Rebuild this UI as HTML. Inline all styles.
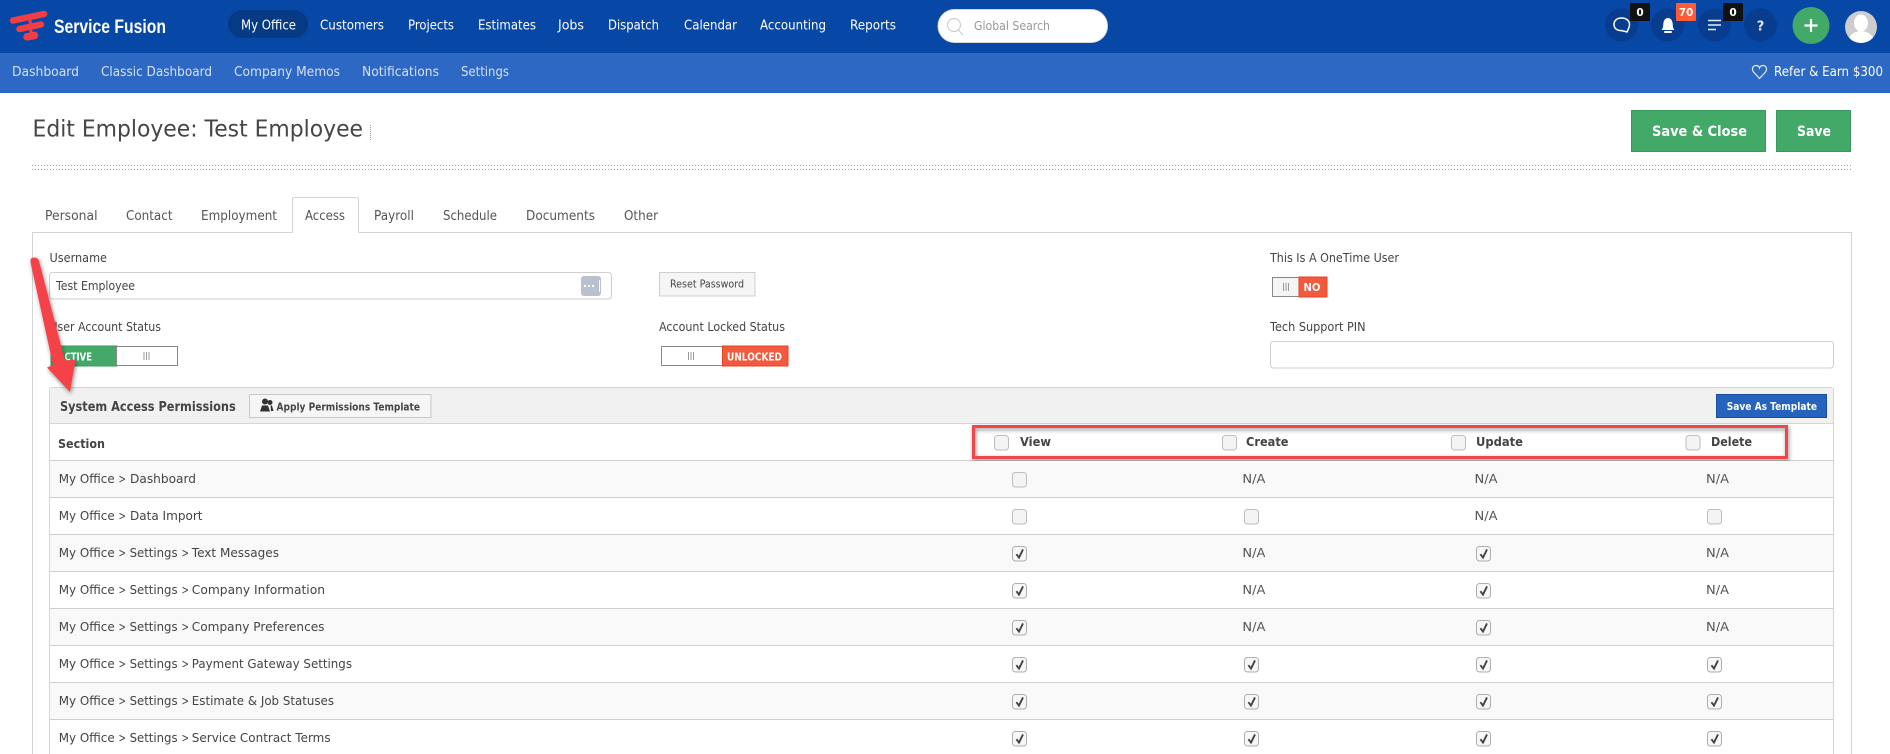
<!DOCTYPE html>
<html lang="en">
<head>
<meta charset="utf-8">
<title>Edit Employee: Test Employee</title>
<style>
html,body{margin:0;padding:0;background:#fff;width:1890px;height:754px;overflow:hidden}
svg{display:block}
text{font-family:"DejaVu Sans","Liberation Sans",sans-serif;font-size:13px;fill:#444}
.nav text{fill:#fff;font-size:13px}
.sub text{fill:#d5e1f5;font-size:13px}
.tab text{fill:#555;font-size:13px}
.lbl{font-size:12.5px;fill:#444}
.row text{font-size:12.5px;fill:#444}
.na{font-size:12px;fill:#555}
.b{font-weight:bold}
.w{fill:#fff}
</style>
</head>
<body>
<svg xmlns="http://www.w3.org/2000/svg" width="1890" height="754" viewBox="0 0 1890 754">
<defs>
  <g id="cb"><rect x=".5" y=".5" width="14" height="14.5" rx="3" fill="#f4f4f4" stroke="#bdbdbd"/></g>
  <g id="ck"><rect x=".5" y=".5" width="14" height="14.5" rx="3" fill="#f7f7f7" stroke="#aeaeae"/><path d="M4.4 8.2 L7 11.6 L11 3.4" fill="none" stroke="#444" stroke-width="1.9"/></g>
  <filter id="sh" x="-10%" y="-20%" width="125%" height="150%"><feDropShadow dx="1" dy="2" stdDeviation="2" flood-color="#000" flood-opacity=".45"/></filter>
</defs>

<rect width="1890" height="754" fill="#fff"/>

<!-- Top header -->
<rect width="1890" height="53" fill="#0747a6"/>
<g fill="none" stroke="#f03e44" stroke-linecap="round">
  <path d="M13 20.500 L44 14" stroke-width="6.500"/>
  <path d="M19.500 29 L41 24.500" stroke-width="6.500"/>
  <path d="M27 36.800 L34.500 35.500" stroke-width="7.500"/>
  <path d="M30 20 L31 32" stroke-width="3"/>
</g>
<text x="54" y="33" class="b w" textLength="112" lengthAdjust="spacingAndGlyphs" style="font-family:'Liberation Sans',sans-serif;font-size:19px">Service Fusion</text>

<rect x="228" y="10" width="80" height="28" rx="14" fill="#073a85"/>
<g class="nav">
  <text x="241" y="29.500" textLength="55" lengthAdjust="spacingAndGlyphs">My Office</text>
  <text x="320" y="29.500" textLength="64" lengthAdjust="spacingAndGlyphs">Customers</text>
  <text x="408" y="29.500" textLength="46" lengthAdjust="spacingAndGlyphs">Projects</text>
  <text x="478" y="29.500" textLength="58" lengthAdjust="spacingAndGlyphs">Estimates</text>
  <text x="558" y="29.500" textLength="26" lengthAdjust="spacingAndGlyphs">Jobs</text>
  <text x="608" y="29.500" textLength="51" lengthAdjust="spacingAndGlyphs">Dispatch</text>
  <text x="684" y="29.500" textLength="53" lengthAdjust="spacingAndGlyphs">Calendar</text>
  <text x="760" y="29.500" textLength="66" lengthAdjust="spacingAndGlyphs">Accounting</text>
  <text x="850" y="29.500" textLength="46" lengthAdjust="spacingAndGlyphs">Reports</text>
</g>

<!-- Search -->
<rect x="938" y="9.500" width="169.500" height="33" rx="16.500" fill="#fff" stroke="#d8d8d8"/>
<circle cx="954" cy="25" r="6.500" fill="none" stroke="#cfcfcf" stroke-width="1.200"/>
<path d="M958.500 30 L963 35" stroke="#cfcfcf" stroke-width="1.200"/>
<text x="974" y="30" textLength="76" lengthAdjust="spacingAndGlyphs" style="font-size:12px;fill:#999">Global Search</text>

<!-- Right icons -->
<g fill="#073c8e">
  <circle cx="1621.500" cy="25" r="16.500"/>
  <circle cx="1667.500" cy="25" r="16.500"/>
  <circle cx="1714.500" cy="25" r="16.500"/>
  <circle cx="1760.500" cy="25" r="16.500"/>
</g>
<path d="M1627 32 C1628 29.500 1629.500 27.500 1629.500 24.500 C1629.500 20.500 1626 18 1621.500 18 C1617 18 1614 20.500 1614 24.500 C1614 28.500 1617.500 31 1621.500 30.500 Z" fill="none" stroke="#fff" stroke-width="1.500"/>
<path d="M1661.500 30 C1663.500 28 1663 25 1663.500 22.500 C1664 19.500 1666 18 1668 18 C1670 18 1672 19.500 1672.500 22.500 C1673 25 1672.500 28 1674.500 30 Z" fill="#fff"/>
<rect x="1664" y="31" width="8" height="2" rx="1" fill="#fff"/>
<path d="M1708 20.500 H1721 M1708 25 H1721 M1708 29.500 H1716" stroke="#e6eefa" stroke-width="1.500"/>
<text x="1760.500" y="30.500" text-anchor="middle" class="b" style="font-size:13px;fill:#dfe8f6">?</text>

<rect x="1630" y="3" width="20" height="18" rx="1" fill="#111"/>
<text x="1640" y="16" text-anchor="middle" class="b w" style="font-size:10.500px">0</text>
<rect x="1676" y="3" width="20" height="18" rx="1" fill="#ff5b38"/>
<text x="1686" y="16" text-anchor="middle" class="b w" style="font-size:10.500px">70</text>
<rect x="1723" y="3" width="20" height="18" rx="1" fill="#111"/>
<text x="1733" y="16" text-anchor="middle" class="b w" style="font-size:10.500px">0</text>

<circle cx="1811" cy="25.500" r="18.500" fill="#43a968"/>
<path d="M1811 19 V32 M1804.500 25.500 H1817.500" stroke="#fff" stroke-width="2.200"/>

<clipPath id="av"><circle cx="1861" cy="27" r="16"/></clipPath>
<circle cx="1861" cy="27" r="16" fill="#cdcdcd"/>
<g clip-path="url(#av)" fill="#fff">
  <ellipse cx="1861" cy="23" rx="7" ry="8.500"/>
  <ellipse cx="1861" cy="42" rx="13" ry="11"/>
</g>

<!-- Sub nav -->
<rect y="53" width="1890" height="40" fill="#2d68c4"/>
<g class="sub">
  <text x="12" y="76" textLength="67" lengthAdjust="spacingAndGlyphs">Dashboard</text>
  <text x="101" y="76" textLength="111" lengthAdjust="spacingAndGlyphs">Classic Dashboard</text>
  <text x="234" y="76" textLength="106" lengthAdjust="spacingAndGlyphs">Company Memos</text>
  <text x="362" y="76" textLength="77" lengthAdjust="spacingAndGlyphs">Notifications</text>
  <text x="461" y="76" textLength="48" lengthAdjust="spacingAndGlyphs">Settings</text>
</g>
<path d="M1759.500 78.500 L1753.500 72 C1751 68.500 1753.500 65.500 1756 65.500 C1757.500 65.500 1759 66.500 1759.500 68 C1760 66.500 1761.500 65.500 1763 65.500 C1765.500 65.500 1768 68.500 1765.500 72 Z" fill="none" stroke="#e6eefa" stroke-width="1.200"/>
<text x="1774" y="76" class="w" textLength="109" lengthAdjust="spacingAndGlyphs" style="font-size:13px">Refer &amp; Earn $300</text>

<!-- Title -->
<text x="32.500" y="136.700" textLength="330.500" lengthAdjust="spacingAndGlyphs" style="font-size:23.500px;fill:#464646">Edit Employee: Test Employee</text>
<path d="M370.500 125 V140" stroke="#999" stroke-dasharray="1 1"/>

<rect x="1631.500" y="110.500" width="134" height="41" fill="#43a968" stroke="#3a9a5d"/>
<text x="1652" y="136" class="b w" textLength="95" lengthAdjust="spacingAndGlyphs" style="font-size:14.500px">Save &amp; Close</text>
<rect x="1776.500" y="110.500" width="74" height="41" fill="#43a968" stroke="#3a9a5d"/>
<text x="1797" y="136" class="b w" textLength="34" lengthAdjust="spacingAndGlyphs" style="font-size:14.500px">Save</text>

<path d="M32 165.500 H1851 M32 169.500 H1851" stroke="#a0a0a0" stroke-dasharray="1 2" fill="none"/>

<!-- Tabs and panel -->
<path d="M32.500 754 V232.500 H292.500 M358.500 232.500 H1851.500 V754" fill="none" stroke="#d5d5d5"/>
<path d="M292.500 232.500 V199 Q292.500 197.500 294 197.500 H357 Q358.500 197.500 358.500 199 V232.500" fill="#fff" stroke="#d5d5d5"/>
<g class="tab">
  <text x="45" y="220" textLength="52.500" lengthAdjust="spacingAndGlyphs">Personal</text>
  <text x="126" y="220" textLength="46.500" lengthAdjust="spacingAndGlyphs">Contact</text>
  <text x="201" y="220" textLength="76" lengthAdjust="spacingAndGlyphs">Employment</text>
  <text x="305" y="220" textLength="40" lengthAdjust="spacingAndGlyphs">Access</text>
  <text x="374" y="220" textLength="40" lengthAdjust="spacingAndGlyphs">Payroll</text>
  <text x="443" y="220" textLength="54" lengthAdjust="spacingAndGlyphs">Schedule</text>
  <text x="526" y="220" textLength="69" lengthAdjust="spacingAndGlyphs">Documents</text>
  <text x="624" y="220" textLength="34" lengthAdjust="spacingAndGlyphs">Other</text>
</g>

<!-- Form -->
<text x="49.500" y="262" class="lbl" textLength="57.500" lengthAdjust="spacingAndGlyphs">Username</text>
<rect x="49.500" y="272.500" width="562" height="26.500" rx="3" fill="#fff" stroke="#cfcfcf"/>
<text x="56" y="290" class="lbl" textLength="79" lengthAdjust="spacingAndGlyphs">Test Employee</text>
<rect x="581" y="276" width="20" height="20" rx="3" fill="#b9c1cf"/>
<path d="M584 286 H596" stroke="#fff" stroke-width="2" stroke-dasharray="2 2"/>
<path d="M599.500 280 V292" stroke="#fff"/>

<rect x="659.500" y="272.500" width="95.500" height="23.500" fill="#f5f5f5" stroke="#cfcfcf"/>
<text x="670" y="287.500" textLength="74" lengthAdjust="spacingAndGlyphs" style="font-size:10.500px;fill:#444">Reset Password</text>

<text x="1270" y="262" class="lbl" textLength="129" lengthAdjust="spacingAndGlyphs">This Is A OneTime User</text>
<rect x="1272.500" y="277.500" width="27" height="19" fill="#f5f5f5" stroke="#888"/>
<path d="M1283.500 283 V291 M1286 283 V291 M1288.500 283 V291" stroke="#999"/>
<rect x="1299" y="277" width="28" height="20" fill="#f15a3c" stroke="#e5432b"/>
<text x="1303.500" y="291" class="b w" textLength="17" lengthAdjust="spacingAndGlyphs" style="font-size:10.500px">NO</text>

<text x="49.500" y="331" class="lbl" textLength="111.500" lengthAdjust="spacingAndGlyphs">User Account Status</text>
<rect x="51" y="346" width="66" height="20" fill="#43a968" stroke="#3a9a5d"/>
<text x="58" y="360.500" class="b w" textLength="34" lengthAdjust="spacingAndGlyphs" style="font-size:10.500px">ACTIVE</text>
<rect x="116.500" y="346.500" width="61" height="19" fill="#fff" stroke="#888"/>
<path d="M144 352 V360 M146.500 352 V360 M149 352 V360" stroke="#999"/>

<text x="659" y="331" class="lbl" textLength="126" lengthAdjust="spacingAndGlyphs">Account Locked Status</text>
<rect x="661.500" y="346.500" width="61" height="19" fill="#fff" stroke="#888"/>
<path d="M688.500 352 V360 M691 352 V360 M693.500 352 V360" stroke="#999"/>
<rect x="722.500" y="346" width="65.500" height="20" fill="#f15a3c" stroke="#e5432b"/>
<text x="727" y="360.500" class="b w" textLength="55" lengthAdjust="spacingAndGlyphs" style="font-size:10.500px">UNLOCKED</text>

<text x="1270" y="331" class="lbl" textLength="95.500" lengthAdjust="spacingAndGlyphs">Tech Support PIN</text>
<rect x="1270.500" y="341.500" width="563" height="26.500" rx="3" fill="#fff" stroke="#cfcfcf"/>

<!-- Permissions panel -->
<path d="M49.500 754 V390 Q49.500 387.500 52 387.500 H1831 Q1833.500 387.500 1833.500 390 V754" fill="#fff" stroke="#d5d5d5"/>
<rect x="50" y="388" width="1783" height="35.500" fill="#f1f1f1"/>
<path d="M50 423.500 H1833" stroke="#d5d5d5"/>
<text x="60" y="411" class="b" textLength="175.700" lengthAdjust="spacingAndGlyphs" style="font-size:13px;fill:#444">System Access Permissions</text>
<rect x="249.500" y="394.500" width="181.500" height="23" fill="#f6f6f6" stroke="#c8c8c8"/>
<g fill="#333">
  <circle cx="265" cy="401.500" r="3"/>
  <path d="M260 411.500 L262 405.500 H268 L270 411.500 Z"/>
  <circle cx="270" cy="402.500" r="2.500"/>
  <path d="M270.500 405.500 H272 L273.500 411 H271 Z"/>
</g>
<text x="276.500" y="410.500" class="b" textLength="143.500" lengthAdjust="spacingAndGlyphs" style="font-size:10.500px;fill:#444">Apply Permissions Template</text>
<rect x="1716.500" y="394.500" width="110" height="23" fill="#2563bd" stroke="#1a4c9f"/>
<text x="1726.700" y="410" class="b w" textLength="90.300" lengthAdjust="spacingAndGlyphs" style="font-size:10.500px">Save As Template</text>

<!-- Header row -->
<text x="58" y="448" class="b" textLength="47" lengthAdjust="spacingAndGlyphs" style="font-size:12.500px;fill:#444">Section</text>
<path d="M50 460.500 H1833" stroke="#cfcfcf"/>
<use href="#cb" x="994" y="435"/>
<text x="1020" y="446" class="b" textLength="31" lengthAdjust="spacingAndGlyphs" style="font-size:12.500px;fill:#444">View</text>
<use href="#cb" x="1222" y="435"/>
<text x="1246" y="446" class="b" textLength="42.500" lengthAdjust="spacingAndGlyphs" style="font-size:12.500px;fill:#444">Create</text>
<use href="#cb" x="1451" y="435"/>
<text x="1476" y="446" class="b" textLength="47" lengthAdjust="spacingAndGlyphs" style="font-size:12.500px;fill:#444">Update</text>
<use href="#cb" x="1685.500" y="435"/>
<text x="1711" y="446" class="b" textLength="41" lengthAdjust="spacingAndGlyphs" style="font-size:12.500px;fill:#444">Delete</text>
<rect x="973.500" y="426.500" width="813" height="31" fill="none" stroke="#f0444a" stroke-width="3" filter="url(#sh)"/>

<!-- Rows -->
<rect x="50" y="461" width="1783" height="36" fill="#f9f9f9"/>
<rect x="50" y="535" width="1783" height="36" fill="#f9f9f9"/>
<rect x="50" y="609" width="1783" height="36" fill="#f9f9f9"/>
<rect x="50" y="683" width="1783" height="36" fill="#f9f9f9"/>
<path d="M50 497.500 H1833 M50 534.500 H1833 M50 571.500 H1833 M50 608.500 H1833 M50 645.500 H1833 M50 682.500 H1833 M50 719.500 H1833" stroke="#cfcfcf"/>

<g class="row">
  <text x="58.700" y="483" textLength="56" lengthAdjust="spacingAndGlyphs">My Office</text>
  <text x="118.500" y="483" textLength="7.500" lengthAdjust="spacingAndGlyphs">&gt;</text>
  <text x="130" y="483" textLength="66" lengthAdjust="spacingAndGlyphs">Dashboard</text>

  <text x="58.700" y="520" textLength="56" lengthAdjust="spacingAndGlyphs">My Office</text>
  <text x="118.500" y="520" textLength="7.500" lengthAdjust="spacingAndGlyphs">&gt;</text>
  <text x="130" y="520" textLength="72.500" lengthAdjust="spacingAndGlyphs">Data Import</text>

  <text x="58.700" y="557" textLength="56" lengthAdjust="spacingAndGlyphs">My Office</text>
  <text x="118.500" y="557" textLength="7.500" lengthAdjust="spacingAndGlyphs">&gt;</text>
  <text x="129.600" y="557" textLength="48" lengthAdjust="spacingAndGlyphs">Settings</text>
  <text x="181.500" y="557" textLength="7.500" lengthAdjust="spacingAndGlyphs">&gt;</text>
  <text x="191.800" y="557" textLength="87.200" lengthAdjust="spacingAndGlyphs">Text Messages</text>

  <text x="58.700" y="594" textLength="56" lengthAdjust="spacingAndGlyphs">My Office</text>
  <text x="118.500" y="594" textLength="7.500" lengthAdjust="spacingAndGlyphs">&gt;</text>
  <text x="129.600" y="594" textLength="48" lengthAdjust="spacingAndGlyphs">Settings</text>
  <text x="181.500" y="594" textLength="7.500" lengthAdjust="spacingAndGlyphs">&gt;</text>
  <text x="191.800" y="594" textLength="133.200" lengthAdjust="spacingAndGlyphs">Company Information</text>

  <text x="58.700" y="631" textLength="56" lengthAdjust="spacingAndGlyphs">My Office</text>
  <text x="118.500" y="631" textLength="7.500" lengthAdjust="spacingAndGlyphs">&gt;</text>
  <text x="129.600" y="631" textLength="48" lengthAdjust="spacingAndGlyphs">Settings</text>
  <text x="181.500" y="631" textLength="7.500" lengthAdjust="spacingAndGlyphs">&gt;</text>
  <text x="191.800" y="631" textLength="132.700" lengthAdjust="spacingAndGlyphs">Company Preferences</text>

  <text x="58.700" y="668" textLength="56" lengthAdjust="spacingAndGlyphs">My Office</text>
  <text x="118.500" y="668" textLength="7.500" lengthAdjust="spacingAndGlyphs">&gt;</text>
  <text x="129.600" y="668" textLength="48" lengthAdjust="spacingAndGlyphs">Settings</text>
  <text x="181.500" y="668" textLength="7.500" lengthAdjust="spacingAndGlyphs">&gt;</text>
  <text x="191.800" y="668" textLength="160.200" lengthAdjust="spacingAndGlyphs">Payment Gateway Settings</text>

  <text x="58.700" y="705" textLength="56" lengthAdjust="spacingAndGlyphs">My Office</text>
  <text x="118.500" y="705" textLength="7.500" lengthAdjust="spacingAndGlyphs">&gt;</text>
  <text x="129.600" y="705" textLength="48" lengthAdjust="spacingAndGlyphs">Settings</text>
  <text x="181.500" y="705" textLength="7.500" lengthAdjust="spacingAndGlyphs">&gt;</text>
  <text x="191.800" y="705" textLength="142.200" lengthAdjust="spacingAndGlyphs">Estimate &amp; Job Statuses</text>

  <text x="58.700" y="742" textLength="56" lengthAdjust="spacingAndGlyphs">My Office</text>
  <text x="118.500" y="742" textLength="7.500" lengthAdjust="spacingAndGlyphs">&gt;</text>
  <text x="129.600" y="742" textLength="48" lengthAdjust="spacingAndGlyphs">Settings</text>
  <text x="181.500" y="742" textLength="7.500" lengthAdjust="spacingAndGlyphs">&gt;</text>
  <text x="191.800" y="742" textLength="138.800" lengthAdjust="spacingAndGlyphs">Service Contract Terms</text>
</g>

<!-- Row 1 -->
<use href="#cb" x="1012" y="472"/>
<text x="1242.400" y="483" class="na" textLength="23" lengthAdjust="spacingAndGlyphs">N/A</text>
<text x="1474.500" y="483" class="na" textLength="23" lengthAdjust="spacingAndGlyphs">N/A</text>
<text x="1706" y="483" class="na" textLength="23" lengthAdjust="spacingAndGlyphs">N/A</text>
<!-- Row 2 -->
<use href="#cb" x="1012" y="509"/>
<use href="#cb" x="1244" y="509"/>
<text x="1474.500" y="520" class="na" textLength="23" lengthAdjust="spacingAndGlyphs">N/A</text>
<use href="#cb" x="1707" y="509"/>
<!-- Row 3 -->
<use href="#ck" x="1012" y="546"/>
<text x="1242.400" y="557" class="na" textLength="23" lengthAdjust="spacingAndGlyphs">N/A</text>
<use href="#ck" x="1476" y="546"/>
<text x="1706" y="557" class="na" textLength="23" lengthAdjust="spacingAndGlyphs">N/A</text>
<!-- Row 4 -->
<use href="#ck" x="1012" y="583"/>
<text x="1242.400" y="594" class="na" textLength="23" lengthAdjust="spacingAndGlyphs">N/A</text>
<use href="#ck" x="1476" y="583"/>
<text x="1706" y="594" class="na" textLength="23" lengthAdjust="spacingAndGlyphs">N/A</text>
<!-- Row 5 -->
<use href="#ck" x="1012" y="620"/>
<text x="1242.400" y="631" class="na" textLength="23" lengthAdjust="spacingAndGlyphs">N/A</text>
<use href="#ck" x="1476" y="620"/>
<text x="1706" y="631" class="na" textLength="23" lengthAdjust="spacingAndGlyphs">N/A</text>
<!-- Row 6 -->
<use href="#ck" x="1012" y="657"/><use href="#ck" x="1244" y="657"/><use href="#ck" x="1476" y="657"/><use href="#ck" x="1707" y="657"/>
<!-- Row 7 -->
<use href="#ck" x="1012" y="694"/><use href="#ck" x="1244" y="694"/><use href="#ck" x="1476" y="694"/><use href="#ck" x="1707" y="694"/>
<!-- Row 8 -->
<use href="#ck" x="1012" y="731"/><use href="#ck" x="1244" y="731"/><use href="#ck" x="1476" y="731"/><use href="#ck" x="1707" y="731"/>

<!-- Annotation arrow -->
<g filter="url(#sh)" fill="#f5434a">
  <path d="M30.500 262 Q30 257.500 34 257.500 Q38 257.500 39 261 L65 360.500 L75.500 359.500 L70 392 L47 367.500 L53 365 Z"/>
</g>
</svg>
</body>
</html>
